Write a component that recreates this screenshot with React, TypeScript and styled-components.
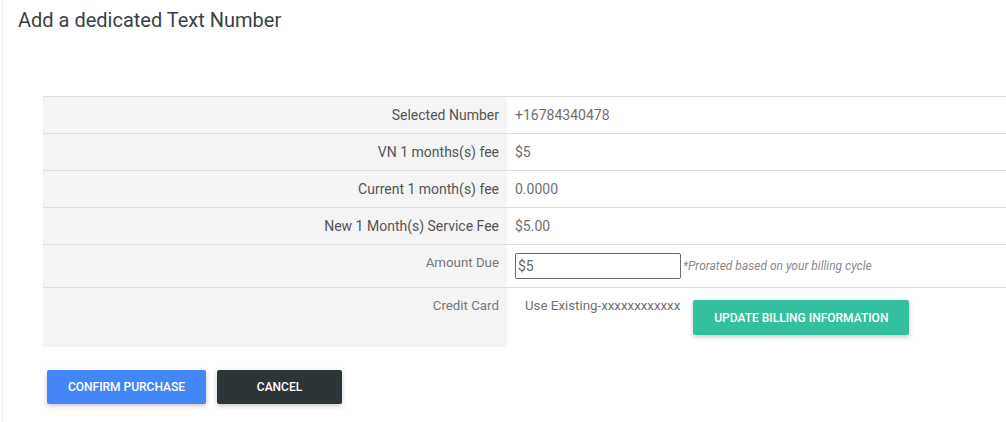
import styled, { createGlobalStyle } from 'styled-components'

const GlobalStyle = createGlobalStyle`
  html, body {
    margin: 0;
    padding: 0;
    background: #ffffff;
  }
  body {
    font-family: Roboto, "Noto Sans", Arial, sans-serif;
  }
`

const S_page = styled.div`
  width: 1006px;
  height: 422px;
  overflow: hidden;
  padding-left: 2px;
  box-sizing: border-box;
`
const S_card = styled.div`
  height: 100%;
  border-left: 1px solid #ededed;
  padding: 8px 0 0 15px;
  box-sizing: border-box;
`
const S_h1 = styled.h1`
  margin: 0;
  font-size: 20px;
  line-height: 24px;
  font-weight: 400;
  color: #3b3f45;
`
const S_table = styled.table`
  margin: 64px 0 0 25px;
  width: calc(100% - 25px);
  border-collapse: collapse;
  font-size: 14px;
  line-height: 20px;
  border-top: 1px solid #dddddd;
`
const S_tr = styled.tr`
  border-bottom: 1px solid #dddddd;
  &:last-child { border-bottom: none; }
`
const S_th = styled.th<{ $small?: boolean }>`
  width: 464px;
  box-sizing: border-box;
  background: #f4f4f4;
  text-align: right;
  font-weight: 400;
  font-size: ${({ $small }) => ($small ? '13.3px' : '14px')};
  color: ${({ $small }) => ($small ? '#777777' : '#555555')};
  padding: 8px 8px;
  vertical-align: top;
`
const S_td = styled.td`
  padding: 8px 8px;
  color: #6f6f6f;
  vertical-align: top;
`
const S_inline = styled.div`
  display: flex;
  align-items: flex-start;
`
const S_input = styled.input`
  width: 166px;
  height: 26px;
  box-sizing: border-box;
  border: 1px solid #6b6b6b;
  border-radius: 2px;
  padding: 0 2px;
  font-family: inherit;
  font-size: 14px;
  color: #666666;
  outline: none;
`
const S_note = styled.span`
  font-size: 12px;
  font-style: italic;
  color: #8a8a8a;
  margin-left: 2px;
  line-height: 26px;
`
const S_card_text = styled.span`
  padding-left: 10px;
  font-size: 13.3px;
  color: #707070;
`
const S_btn = styled.button<{ $bg: string; $w: number; $h?: number }>`
  width: ${({ $w }) => $w}px;
  height: ${({ $h }) => $h ?? 34}px;
  border: none;
  border-radius: 2px;
  background: ${({ $bg }) => $bg};
  color: #ffffff;
  font-family: inherit;
  font-size: 12px;
  font-weight: 500;
  text-transform: uppercase;
  box-shadow: 0 2px 5px rgba(0, 0, 0, 0.22);
  cursor: pointer;
  padding: 0;
`
const S_btn_update = styled(S_btn)`
  margin: 4px 0 4px 13px;
`
const S_actions = styled.div`
  display: flex;
  gap: 11px;
  margin: 23px 0 0 29px;
`

const rows = [
  { label: 'Selected Number', value: '+16784340478' },
  { label: 'VN 1 months(s) fee', value: '$5' },
  { label: 'Current 1 month(s) fee', value: '0.0000' },
  { label: 'New 1 Month(s) Service Fee', value: '$5.00' },
]

const App = () => {
  return (
    <>
      <GlobalStyle />
      <S_page>
        <S_card>
          <S_h1>Add a dedicated Text Number</S_h1>
          <S_table>
            <tbody>
              {rows.map((r) => (
                <S_tr key={r.label}>
                  <S_th>{r.label}</S_th>
                  <S_td>{r.value}</S_td>
                </S_tr>
              ))}
              <S_tr>
                <S_th $small>Amount Due</S_th>
                <S_td>
                  <S_inline>
                    <S_input defaultValue="$5" />
                    <S_note>*Prorated based on your billing cycle</S_note>
                  </S_inline>
                </S_td>
              </S_tr>
              <S_tr>
                <S_th $small>Credit Card</S_th>
                <S_td>
                  <S_inline>
                    <S_card_text>Use Existing-xxxxxxxxxxxx</S_card_text>
                    <S_btn_update $bg="#34bf9f" $w={216} $h={35}>Update Billing Information</S_btn_update>
                  </S_inline>
                </S_td>
              </S_tr>
            </tbody>
          </S_table>
          <S_actions>
            <S_btn $bg="#4287f5" $w={159}>Confirm Purchase</S_btn>
            <S_btn $bg="#2e3538" $w={125}>Cancel</S_btn>
          </S_actions>
        </S_card>
      </S_page>
    </>
  )
}

export default App
